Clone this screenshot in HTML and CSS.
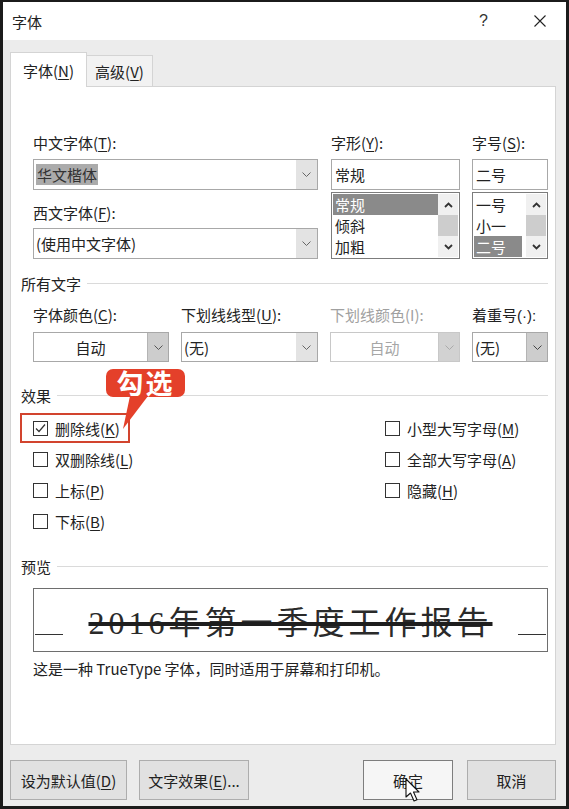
FILE: index.html
```html
<!DOCTYPE html>
<html lang="zh-CN">
<head>
  <meta charset="UTF-8">
  <title>字体</title>
  <link rel="stylesheet" href="styles.css">
</head>
<body>
  <div class="dialog">
    <div class="titlebar">
      <span class="title">字体</span>
      <div class="title-actions">
        <span class="help">?</span>
        <svg class="close" width="12" height="12" viewBox="0 0 12 12"><path d="M0.5 0.5L11.5 11.5M11.5 0.5L0.5 11.5" stroke="#222" stroke-width="1.1" fill="none"/></svg>
      </div>
    </div>

    <div class="body">
      <div class="tabs">
        <div class="tab active">字体(<u>N</u>)</div>
        <div class="tab">高级(<u>V</u>)</div>
      </div>

      <div class="panel">
        <div class="font-grid">
          <div class="col col-wide">
            <label>中文字体(<u>T</u>):</label>
            <div class="combo">
              <span class="combo-text"><span class="hl">华文楷体</span></span>
              <span class="combo-btn"><svg width="9" height="5" viewBox="0 0 9 5"><path d="M0.5 0.5L4.5 4.5L8.5 0.5" stroke="#666" fill="none"/></svg></span>
            </div>
            <label class="second">西文字体(<u>F</u>):</label>
            <div class="combo">
              <span class="combo-text">(使用中文字体)</span>
              <span class="combo-btn"><svg width="9" height="5" viewBox="0 0 9 5"><path d="M0.5 0.5L4.5 4.5L8.5 0.5" stroke="#666" fill="none"/></svg></span>
            </div>
          </div>

          <div class="col col-mid">
            <label>字形(<u>Y</u>):</label>
            <div class="field">常规</div>
            <div class="list">
              <ul class="list-items">
                <li class="sel">常规</li>
                <li>倾斜</li>
                <li>加粗</li>
              </ul>
              <div class="scrollbar">
                <span class="arrow"><svg width="9" height="6" viewBox="0 0 9 6"><path d="M1 5L4.5 1.5L8 5" stroke="#333" stroke-width="1.8" fill="none"/></svg></span>
                <span class="thumb"></span>
                <span class="arrow"><svg width="9" height="6" viewBox="0 0 9 6"><path d="M1 1L4.5 4.5L8 1" stroke="#333" stroke-width="1.8" fill="none"/></svg></span>
              </div>
            </div>
          </div>

          <div class="col col-size">
            <label>字号(<u>S</u>):</label>
            <div class="field">二号</div>
            <div class="list">
              <ul class="list-items">
                <li>一号</li>
                <li>小一</li>
                <li class="sel">二号</li>
              </ul>
              <div class="scrollbar">
                <span class="arrow"><svg width="9" height="6" viewBox="0 0 9 6"><path d="M1 5L4.5 1.5L8 5" stroke="#333" stroke-width="1.8" fill="none"/></svg></span>
                <span class="thumb"></span>
                <span class="arrow"><svg width="9" height="6" viewBox="0 0 9 6"><path d="M1 1L4.5 4.5L8 1" stroke="#333" stroke-width="1.8" fill="none"/></svg></span>
              </div>
            </div>
          </div>
        </div>

        <div class="section-head first">
          <span>所有文字</span>
          <span class="rule"></span>
        </div>

        <div class="attr-grid">
          <label>字体颜色(<u>C</u>):</label>
          <label>下划线线型(<u>U</u>):</label>
          <label class="disabled">下划线颜色(I):</label>
          <label>着重号<span class="latin">(·):</span></label>

          <div class="combo">
            <span class="combo-text center">自动</span>
            <span class="combo-btn dark"><svg width="9" height="5" viewBox="0 0 9 5"><path d="M0.5 0.5L4.5 4.5L8.5 0.5" stroke="#555" fill="none"/></svg></span>
          </div>
          <div class="combo">
            <span class="combo-text">(无)</span>
            <span class="combo-btn"><svg width="9" height="5" viewBox="0 0 9 5"><path d="M0.5 0.5L4.5 4.5L8.5 0.5" stroke="#666" fill="none"/></svg></span>
          </div>
          <div class="combo disabled">
            <span class="combo-text center">自动</span>
            <span class="combo-btn dark"><svg width="9" height="5" viewBox="0 0 9 5"><path d="M0.5 0.5L4.5 4.5L8.5 0.5" stroke="#aaa" fill="none"/></svg></span>
          </div>
          <div class="combo">
            <span class="combo-text">(无)</span>
            <span class="combo-btn dark"><svg width="9" height="5" viewBox="0 0 9 5"><path d="M0.5 0.5L4.5 4.5L8.5 0.5" stroke="#444" fill="none"/></svg></span>
          </div>
        </div>

        <div class="section-head effects-head">
          <span>效果</span>
          <span class="rule"></span>
        </div>

        <div class="checks">
          <div class="callout">
            勾选
            <svg class="callout-tail" width="30" height="36" viewBox="0 0 30 36"><polygon points="8,0 26,0 1,33" fill="#e4402a"/></svg>
          </div>

          <div class="check-col left">
            <div class="check-row marked">
              <span class="box"><svg width="13" height="13" viewBox="0 0 13 13"><path d="M2 6.5L5 9.5L11 2.5" stroke="#333" stroke-width="1.2" fill="none"/></svg></span>
              <span>删除线(<u>K</u>)</span>
              <span class="mark"></span>
            </div>
            <div class="check-row"><span class="box"></span><span>双删除线(<u>L</u>)</span></div>
            <div class="check-row"><span class="box"></span><span>上标(<u>P</u>)</span></div>
            <div class="check-row"><span class="box"></span><span>下标(<u>B</u>)</span></div>
          </div>
          <div class="check-col">
            <div class="check-row"><span class="box"></span><span>小型大写字母(<u>M</u>)</span></div>
            <div class="check-row"><span class="box"></span><span>全部大写字母(<u>A</u>)</span></div>
            <div class="check-row"><span class="box"></span><span>隐藏(<u>H</u>)</span></div>
          </div>
        </div>

        <div class="section-head preview-head">
          <span>预览</span>
          <span class="rule"></span>
        </div>

        <div class="preview">
          <span class="base-line"></span>
          <span class="preview-text">2016年第一季度工作报告</span>
          <span class="base-line"></span>
        </div>
        <p class="caption">这是一种 TrueType 字体，同时适用于屏幕和打印机。</p>
      </div>

      <div class="buttons">
        <button class="btn btn-default">设为默认值(<u>D</u>)</button>
        <button class="btn btn-effects">文字效果(<u>E</u>)...</button>
        <span class="spacer"></span>
        <button class="btn btn-ok">确定
          <svg class="cursor" width="16" height="26" viewBox="0 0 16 26"><path d="M1 1L1 19L5.5 15L9 23L12 21.7L8.5 14L14 14Z" fill="#fff" stroke="#111" stroke-width="1.1" stroke-linejoin="round"/></svg>
        </button>
        <button class="btn btn-cancel">取消</button>
      </div>
    </div>
  </div>
</body>
</html>
```

FILE: styles.css
```css
* {
  box-sizing: border-box;
}
body {
  margin: 0;
  font-family: "Noto Sans CJK SC", "Noto Sans", sans-serif;
  font-size: 15px;
  color: #222;
  background: #1b1b1b;
}
u {
  text-decoration: underline;
  text-underline-offset: 2px;
}
.latin {
  font-family: "Liberation Sans", sans-serif;
}
.dialog {
  width: 569px;
  height: 809px;
  border: 3px solid #1b1b1b;
  border-top-width: 2px;
  display: flex;
  flex-direction: column;
  background: #ececec;
}
.titlebar {
  height: 38px;
  background: #fff;
  display: flex;
  align-items: center;
  justify-content: space-between;
  padding: 0 20px 0 9px;
}
.title-actions {
  display: flex;
  align-items: center;
  gap: 46px;
}
.help {
  font-family: "Liberation Sans", sans-serif;
  font-size: 16px;
  color: #333;
}

/* body + tabs */
.body {
  flex: 1;
  display: flex;
  flex-direction: column;
  padding: 12px 10px 6px 7px;
}
.tabs {
  display: flex;
  height: 35px;
  margin-bottom: -1px;
}
.tab {
  width: 66px;
  height: 32px;
  margin-top: 3px;
  background: #f2f2f2;
  border: 1px solid #d4d4d4;
  border-left: none;
  border-bottom: none;
  display: flex;
  align-items: center;
  justify-content: center;
}
.tab.active {
  width: 77px;
  height: 35px;
  margin-top: 0;
  background: #fff;
  border-left: 1px solid #d4d4d4;
  position: relative;
  z-index: 1;
}
.panel {
  height: 659px;
  background: #fff;
  border: 1px solid #d4d4d4;
  padding: 46px 7px 0 10px;
}

/* fonts block */
.font-grid {
  display: flex;
  margin-left: 12px;
  gap: 13px;
}
.col {
  display: flex;
  flex-direction: column;
}
.col-wide { width: 285px; }
.col-mid { width: 129px; }
.col-size { width: 76px; margin-left: -1px; }
label {
  display: block;
  height: 20px;
  line-height: 20px;
  margin-bottom: 6px;
  white-space: nowrap;
}
label.second {
  margin-top: 13px;
  margin-bottom: 5px;
}
label.disabled {
  color: #a0a0a0;
}
.combo {
  height: 31px;
  border: 1px solid #a8a8a8;
  display: flex;
  background: #fff;
}
.combo-text {
  flex: 1;
  display: flex;
  align-items: center;
  padding: 0 2px;
  white-space: nowrap;
}
.combo-text.center {
  justify-content: center;
}
.hl {
  background: #ababab;
  color: #333;
  padding: 0 1px;
}
.combo-btn {
  width: 21px;
  display: flex;
  align-items: center;
  justify-content: center;
  background: #e3e3e3;
}
.combo-btn.dark {
  background: #cdcdcd;
  border-left: 1px solid #b4b4b4;
}
.combo.disabled {
  border-color: #c8c8c8;
  color: #a6a6a6;
}
.combo.disabled .combo-btn {
  background: #d2d2d2;
  border-left-color: #c8c8c8;
}
.field {
  height: 31px;
  border: 1px solid #a8a8a8;
  display: flex;
  align-items: center;
  padding: 0 3px;
}
.list {
  height: 67px;
  margin-top: 2px;
  border: 1px solid #7c7c7c;
  display: flex;
  padding: 1px;
}
.list-items {
  flex: 1;
  list-style: none;
  margin: 0;
  padding: 0;
}
.list-items li {
  height: 21px;
  line-height: 21px;
  padding-left: 2px;
}
.list-items li.sel {
  background: #8a8a8a;
  color: #fff;
}
.scrollbar {
  width: 20px;
  margin-left: 4px;
  display: flex;
  flex-direction: column;
  background: #f0f0f0;
}
.col-mid .scrollbar {
  margin-left: 0;
}
.arrow {
  height: 21px;
  display: flex;
  align-items: center;
  justify-content: center;
}
.thumb {
  height: 21px;
  background: #cdcdcd;
}

/* section headings */
.section-head {
  display: flex;
  align-items: center;
  gap: 6px;
  height: 20px;
}
.section-head .rule {
  flex: 1;
  height: 1px;
  background: #dadada;
}
.section-head.first { margin-top: 14px; }
.effects-head { margin-top: 23px; }
.preview-head { margin-top: 19px; }

/* all text block */
.attr-grid {
  display: grid;
  grid-template-columns: 136px 137px 130px 76px;
  column-gap: 12px;
  margin: 12px 0 0 12px;
}
.attr-grid label {
  margin-bottom: 7px;
}
.attr-grid .combo {
  height: 30px;
}

/* effects */
.checks {
  position: relative;
  display: flex;
  margin: 8px 0 0 12px;
}
.check-col.left {
  width: 352px;
}
.check-row {
  position: relative;
  height: 31px;
  display: flex;
  align-items: center;
  gap: 7px;
  white-space: nowrap;
}
.box {
  width: 15px;
  height: 15px;
  border: 1px solid #333;
  background: #fff;
  display: flex;
  align-items: center;
  justify-content: center;
}
.mark {
  position: absolute;
  left: -13px;
  top: 0;
  width: 110px;
  height: 30px;
  border: 2px solid #d2442e;
}
.callout {
  position: absolute;
  left: 73px;
  top: -44px;
  width: 79px;
  height: 28px;
  background: #e4402a;
  border-radius: 7px;
  color: #fff;
  font-size: 27px;
  font-weight: bold;
  line-height: 28px;
  text-align: center;
  letter-spacing: 2px;
  z-index: 2;
}
.callout-tail {
  position: absolute;
  left: 16px;
  top: 27px;
}

/* preview */
.preview {
  height: 64px;
  margin: 12px 0 0 12px;
  border: 1px solid #6e6e6e;
  display: flex;
  align-items: center;
  padding: 0 1px;
}
.base-line {
  align-self: flex-start;
  width: 28px;
  height: 1px;
  margin-top: 45px;
  background: #333;
}
.preview-text {
  flex: 1;
  text-align: center;
  font-family: "Liberation Serif", "Noto Sans CJK SC", serif;
  font-size: 32px;
  letter-spacing: 4px;
  color: #2a2a2a;
  text-decoration: line-through;
  text-decoration-thickness: 4px;
  text-decoration-color: #1e1e1e;
}
.caption {
  margin: 7px 0 0 12px;
  height: 20px;
  line-height: 20px;
}

/* buttons */
.buttons {
  display: flex;
  height: 40px;
  margin-top: 15px;
}
.btn {
  height: 40px;
  font-family: inherit;
  font-size: 15px;
  color: #222;
  background: #e1e1e1;
  border: 1px solid #adadad;
  padding: 0;
}
.btn-default { width: 117px; }
.btn-effects { width: 110px; margin-left: 12px; }
.spacer { flex: 1; }
.btn-ok {
  width: 90px;
  position: relative;
  background: #f6f6f6;
  border-color: #7e7e7e;
}
.btn-cancel { width: 89px; margin-left: 14px; }
.cursor {
  position: absolute;
  left: 41px;
  top: 17px;
}
```
